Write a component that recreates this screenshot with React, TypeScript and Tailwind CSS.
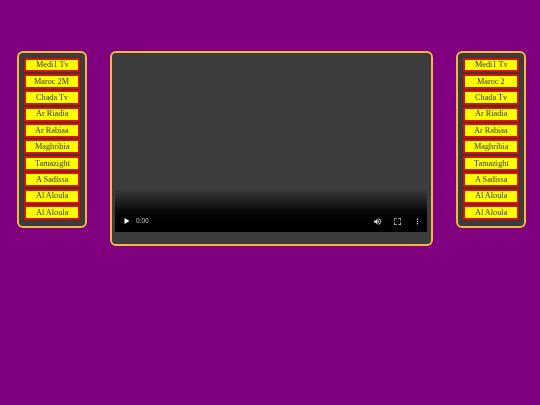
const leftChannels = ["Medi1 Tv", "Maroc 2M", "Chada Tv", "Ar Riadia", "Ar Rabiaa", "Maghribia", "Tamazight", "A Sadissa", "Al Aloula", "Al Aloula"];
const rightChannels = ["Medi1 Tv", "Maroc 2", "Chada Tv", "Ar Riadia", "Ar Rabiaa", "Maghribia", "Tamazight", "A Sadissa", "Al Aloula", "Al Aloula"];

const ChannelList = ({ items }: { items: string[] }) => (
  <div className="flex h-[177px] w-[70px] shrink-0 flex-col gap-[1.5px] rounded-[6px] border-2 border-[#f0b840] bg-[#3c3c3c] px-[5px] pt-[4.5px]">
    {items.map((name, index) => (
      <button
        key={index}
        className="flex h-[14.9px] w-full items-center justify-center border-2 border-[#d81000] bg-[#ffff00] pt-[1px] font-['Liberation_Serif',serif] text-[8.25px] leading-none text-[#333] shadow-[0_0_1px_#901000]"
      >
        <span className="will-change-transform">{name}</span>
      </button>
    ))}
  </div>
);

export default function App() {
  return (
    <div className="flex h-[405px] w-[540px] items-start gap-[23px] overflow-hidden bg-[#800080] pl-[17px] pt-[51px]">
      <ChannelList items={leftChannels} />

      <div className="h-[195px] w-[323px] shrink-0 rounded-[6px] border-2 border-[#f0b840] bg-[#3c3c3c] pl-[3px] pr-[4px]">
        {/* player */}
        <div className="flex h-[179px] w-full flex-col justify-end bg-gradient-to-b from-[#3c3c3c] from-[76%] to-black to-[97%]">
          <div className="flex h-[22px] items-center pl-[7px] pr-[5px]">
            <svg width="8" height="8" viewBox="0 0 8 8" className="ml-[1px]">
              <path d="M1.5 1 L6.5 4 L1.5 7 Z" fill="#fff" />
            </svg>
            <span className="ml-[5px] font-['Liberation_Sans',sans-serif] text-[6.5px] leading-none text-[#ccc] will-change-transform">0:00</span>
            <div className="flex-1" />
            <svg width="9" height="9" viewBox="0 0 24 24" fill="#ddd">
              <path d="M3 9v6h4l5 5V4L7 9H3zm13.5 3A4.5 4.5 0 0 0 14 8v8a4.5 4.5 0 0 0 2.5-4zM14 3.2v2.1a7 7 0 0 1 0 13.4v2.1a9 9 0 0 0 0-17.6z" />
            </svg>
            <svg width="9" height="9" viewBox="0 0 24 24" fill="#ccc" className="ml-[11px]">
              <path d="M5 10H3V3h7v2H5v5zm14 0V5h-5V3h7v7h-2zM5 14v5h5v2H3v-7h2zm14 0h2v7h-7v-2h5v-5z" />
            </svg>
            <svg width="9" height="9" viewBox="0 0 24 24" fill="#ddd" className="ml-[11px]">
              <path d="M12 8a2 2 0 1 0 0-4 2 2 0 0 0 0 4zm0 2a2 2 0 1 0 0 4 2 2 0 0 0 0-4zm0 6a2 2 0 1 0 0 4 2 2 0 0 0 0-4z" />
            </svg>
          </div>
        </div>
      </div>

      <ChannelList items={rightChannels} />
    </div>
  );
}
